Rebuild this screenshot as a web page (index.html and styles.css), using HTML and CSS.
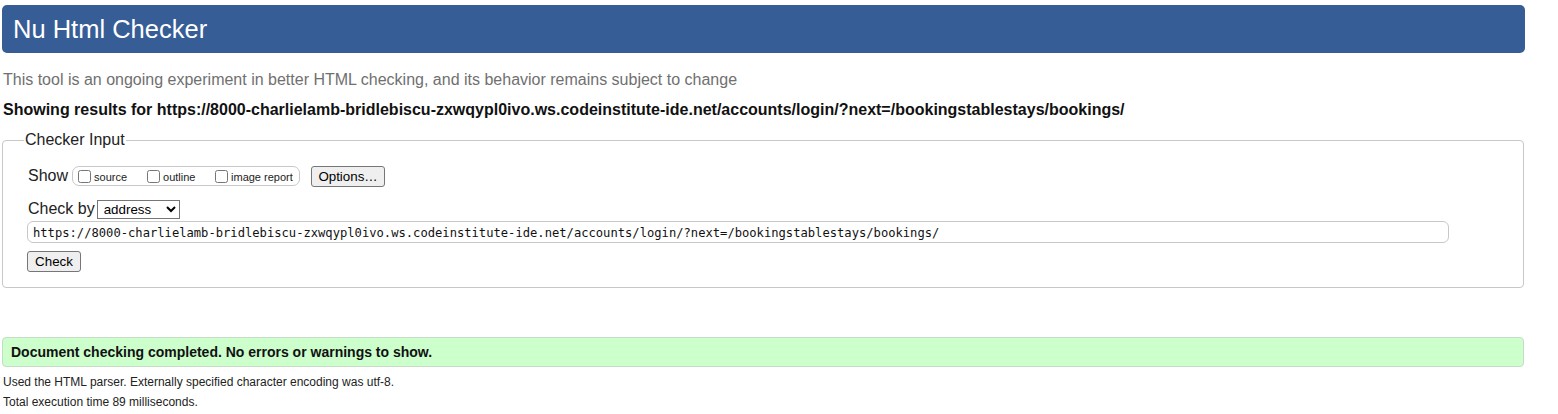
FILE: index.html
```html
<!DOCTYPE html>
<html>
<head>
<meta charset="utf-8">
<title>Nu Html Checker</title>
<link rel="stylesheet" href="styles.css">
</head>
<body>
<h1 class="title">Nu Html Checker</h1>
<p class="intro">This tool is an ongoing experiment in better HTML checking, and its behavior remains subject to change</p>
<p class="results-for">Showing results for https://8000-charlielamb-bridlebiscu-zxwqypl0ivo.ws.codeinstitute-ide.net/accounts/login/?next=/bookingstablestays/bookings/</p>
<fieldset class="checker">
  <legend class="legend">Checker Input</legend>
  <div class="row show-row">
    <span class="label">Show</span>
    <span class="pill">
      <label class="opt"><input type="checkbox" class="cb">source</label>
      <label class="opt"><input type="checkbox" class="cb">outline</label>
      <label class="opt"><input type="checkbox" class="cb">image report</label>
    </span>
    <button class="btn options">Options…</button>
  </div>
  <div class="row by-row">
    <span class="label">Check by</span>
    <select class="select"><option>address</option></select>
  </div>
  <input class="url" type="text" value="https://8000-charlielamb-bridlebiscu-zxwqypl0ivo.ws.codeinstitute-ide.net/accounts/login/?next=/bookingstablestays/bookings/">
  <div class="row"><button class="btn check">Check</button></div>
</fieldset>
<p class="success">Document checking completed. No errors or warnings to show.</p>
<p class="details">Used the HTML parser. Externally specified character encoding was utf-8.</p>
<p class="details">Total execution time 89 milliseconds.</p>
</body>
</html>
```

FILE: styles.css
```css
html, body {
  margin: 0;
  background: #fff;
}
body {
  padding: 5px 33px 0 2px;
  font-family: "Liberation Sans", Arial, sans-serif;
  color: #111;
}
.title {
  margin: 0;
  height: 48px;
  box-sizing: border-box;
  padding: 9px 0 0 11px;
  background: #365d95;
  border-radius: 5px;
  color: #fff;
  font-weight: normal;
  font-size: 25.5px;
  line-height: 30px;
}
.intro {
  margin: 17px 0 0 1px;
  font-size: 16px;
  line-height: 20px;
  color: #707070;
}
.results-for {
  margin: 10px 0 0 1px;
  font-size: 16px;
  line-height: 20px;
  font-weight: bold;
  color: #111;
}
.checker {
  margin: 11px 1px 0 0;
  padding: 16px 0 15px 24px;
  border: 1px solid #c8c8c8;
  border-radius: 4px;
}
.legend {
  padding: 0 1px;
  margin-left: -3px;
  font-size: 16px;
  line-height: 18px;
  color: #222;
}
.row {
  display: flex;
  align-items: center;
}
.show-row {
  height: 22px;
}
.label {
  font-size: 16px;
  color: #222;
  margin-left: 1px;
}
.pill {
  display: inline-flex;
  align-items: center;
  margin-left: 4px;
  height: 20px;
  width: 228px;
  box-sizing: border-box;
  border: 1px solid #c8c8c8;
  border-radius: 7px;
  padding: 0 0 0 5px;
}
.opt {
  display: inline-flex;
  align-items: center;
  font-size: 11px;
  color: #222;
  padding-top: 2px;
}
.opt:nth-child(1) { width: 69px; }
.opt:nth-child(2) { width: 68px; }
.cb {
  width: 13px;
  height: 13px;
  margin: 0 3px 2px 0;
}
.btn {
  font-family: "Liberation Sans", Arial, sans-serif;
  font-size: 13.33px;
  background: #efefef;
  border: 1px solid #767676;
  border-radius: 3px;
  color: #000;
  padding: 1px 6px;
  height: 21px;
}
.options {
  margin-left: 11px;
  width: 74px;
}
.by-row {
  margin-top: 12px;
  height: 20px;
}
.select {
  margin-left: 2px;
  width: 83px;
  height: 19px;
  font-family: "Liberation Sans", Arial, sans-serif;
  font-size: 13.33px;
  border: 1px solid #767676;
  border-radius: 0;
  background: #fff;
  padding: 0 0 0 2px;
}
.url {
  display: block;
  margin-top: 2px;
  width: 1422px;
  height: 22px;
  box-sizing: border-box;
  border: 1px solid #c8c8c8;
  border-radius: 6px;
  padding: 1px 5px 0;
  font-family: "DejaVu Sans Mono", "Liberation Mono", monospace;
  font-size: 12.15px;
  color: #111;
}
.check {
  margin-top: 8px;
  width: 54px;
}
.success {
  margin: 49px 1px 0 0;
  height: 30px;
  box-sizing: border-box;
  background: #ccffcc;
  border: 1px solid #c6dcc6;
  border-radius: 4px;
  padding: 5px 0 0 8px;
  font-size: 14px;
  line-height: 18px;
  font-weight: bold;
  color: #111;
}
.details {
  margin: 8px 0 0 1px;
  font-size: 12px;
  line-height: 14px;
  color: #222;
}
.details + .details {
  margin-top: 6px;
}
```
